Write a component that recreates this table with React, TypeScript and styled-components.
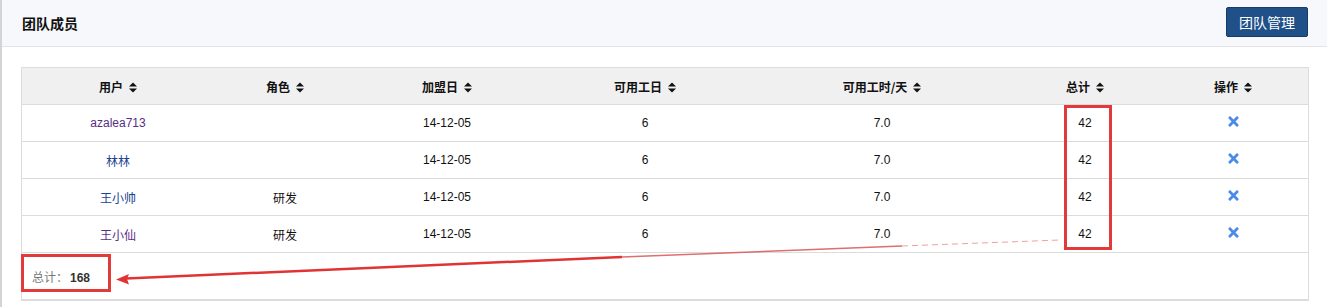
import * as React from "react";
import styled, { createGlobalStyle } from "styled-components";
import { FaTimes } from "react-icons/fa";

const GlobalStyle = createGlobalStyle`
  html, body {
    margin: 0;
    padding: 0;
    background: #fff;
  }
  body {
    font-family: "Liberation Sans", Arial, "Noto Sans CJK SC", sans-serif;
    font-size: 12px;
    color: #222;
  }
`;

const Page = styled.div`
  position: relative;
  width: 1327px;
  height: 307px;
  box-sizing: border-box;
  border-left: 2px solid #d4d4d4;
  overflow: hidden;
`;

const Header = styled.div`
  height: 47px;
  box-sizing: border-box;
  background: #f7f8fb;
  border-bottom: 1px solid #e3e4e6;
  display: flex;
  align-items: center;
  justify-content: space-between;
  padding: 0 19px 0 20px;
`;

const Title = styled.div`
  font-family: "Noto Sans CJK SC", sans-serif;
  font-size: 14px;
  font-weight: 700;
  color: #111;
`;

const ManageButton = styled.button`
  height: 30px;
  width: 82px;
  margin-top: -2px;
  border: 1px solid #163d68;
  border-radius: 2px;
  background: #1f5088;
  color: #fff;
  font-family: "Noto Sans CJK SC", sans-serif;
  font-size: 14px;
  padding: 0;
  cursor: pointer;
`;

const Content = styled.div`
  padding: 20px 17px 0 19px;
`;

const Table = styled.table`
  width: 1288px;
  border-collapse: collapse;
  table-layout: fixed;
  border: 1px solid #dcdcdc;
  border-bottom: 2px solid #dcdcdc;
`;

const Th = styled.th<{ $w?: number }>`
  width: ${(p) => (p.$w ? `${p.$w}px` : "auto")};
  height: 36px;
  padding: 0;
  background: #f0f0f0;
  border-bottom: 1px solid #dcdcdc;
  font-family: "Noto Sans CJK SC", sans-serif;
  font-size: 12px;
  font-weight: 700;
  color: #111;
  text-align: center;
  white-space: nowrap;
`;

const Td = styled.td`
  height: 36px;
  padding: 0;
  border-top: 1px solid #dcdcdc;
  text-align: center;
  font-size: 12px;
  color: #111;
`;

const Cjk = styled.span`
  font-family: "Noto Sans CJK SC", sans-serif;
`;

const UserLink = styled.a<{ $visited?: boolean }>`
  color: ${(p) => (p.$visited ? "#5a2d86" : "#1b3f92")};
  text-decoration: none;
  font-family: "Liberation Sans", Arial, "Noto Sans CJK SC", sans-serif;
`;

const Remove = styled.span`
  display: inline-flex;
  color: #4a8ae8;
  font-size: 15px;
  cursor: pointer;
`;

const FooterCell = styled.td`
  height: 46px;
  padding: 0 0 0 10px;
  border-top: 1px solid #dcdcdc;
  text-align: left;
  font-size: 12px;
`;

const TotalLabel = styled.span`
  font-family: "Noto Sans CJK SC", sans-serif;
  color: #777;
`;

const TotalValue = styled.b`
  color: #333;
  font-size: 12px;
  margin-left: 2px;
`;

const SortWrap = styled.span`
  display: inline-flex;
  margin-left: 6px;
  vertical-align: -1px;
`;

const Overlay = styled.svg`
  position: absolute;
  left: 0;
  top: 0;
  pointer-events: none;
`;

const SortIcon = () => (
  <SortWrap>
    <svg width="8" height="11" viewBox="0 0 8 11">
      <path d="M0 4.5 L4 0.5 L8 4.5 Z" fill="#111" />
      <path d="M0 6.5 L4 10.5 L8 6.5 Z" fill="#111" />
    </svg>
  </SortWrap>
);

type Member = { name: string; role: string; visited: boolean };

const members: Member[] = [
  { name: "azalea713", role: "", visited: true },
  { name: "林林", role: "", visited: false },
  { name: "王小帅", role: "研发", visited: false },
  { name: "王小仙", role: "研发", visited: true },
];

const columns: { label: string; w?: number }[] = [
  { label: "用户", w: 192 },
  { label: "角色", w: 142 },
  { label: "加盟日", w: 182 },
  { label: "可用工日", w: 214 },
  { label: "可用工时/天", w: 260 },
  { label: "总计", w: 146 },
  { label: "操作" },
];

export default function App() {
  return (
    <>
      <GlobalStyle />
      <Page>
        <Header>
          <Title>团队成员</Title>
          <ManageButton>团队管理</ManageButton>
        </Header>
        <Content>
          <Table>
            <thead>
              <tr>
                {columns.map((c) => (
                  <Th key={c.label} $w={c.w}>
                    {c.label}
                    <SortIcon />
                  </Th>
                ))}
              </tr>
            </thead>
            <tbody>
              {members.map((m) => (
                <tr key={m.name}>
                  <Td>
                    <UserLink href="#" $visited={m.visited}>
                      {m.name}
                    </UserLink>
                  </Td>
                  <Td>
                    <Cjk>{m.role}</Cjk>
                  </Td>
                  <Td>14-12-05</Td>
                  <Td>6</Td>
                  <Td>7.0</Td>
                  <Td>42</Td>
                  <Td>
                    <Remove>
                      <FaTimes />
                    </Remove>
                  </Td>
                </tr>
              ))}
              <tr>
                <FooterCell colSpan={7}>
                  <TotalLabel>总计：</TotalLabel>
                  <TotalValue>168</TotalValue>
                </FooterCell>
              </tr>
            </tbody>
          </Table>
        </Content>
        <Overlay width="1327" height="307" viewBox="0 0 1327 307">
          <rect x="1063.5" y="106.5" width="45" height="142" fill="none" stroke="#e23a3a" strokeWidth="3" />
          <rect x="20.5" y="255.5" width="87" height="35" fill="none" stroke="#e23a3a" strokeWidth="3" />
          <line x1="124" y1="278.5" x2="620" y2="257" stroke="#e03434" strokeWidth="2.5" />
          <line x1="620" y1="257" x2="900" y2="246" stroke="#d84a4a" strokeWidth="1.5" opacity="0.8" />
          <line x1="900" y1="246" x2="1058" y2="240" stroke="#f0a0a0" strokeWidth="1" strokeDasharray="6 4" />
          <path d="M114 279.5 L127 274 L125 279 L127 284.5 Z" fill="#e03434" />
        </Overlay>
      </Page>
    </>
  );
}
